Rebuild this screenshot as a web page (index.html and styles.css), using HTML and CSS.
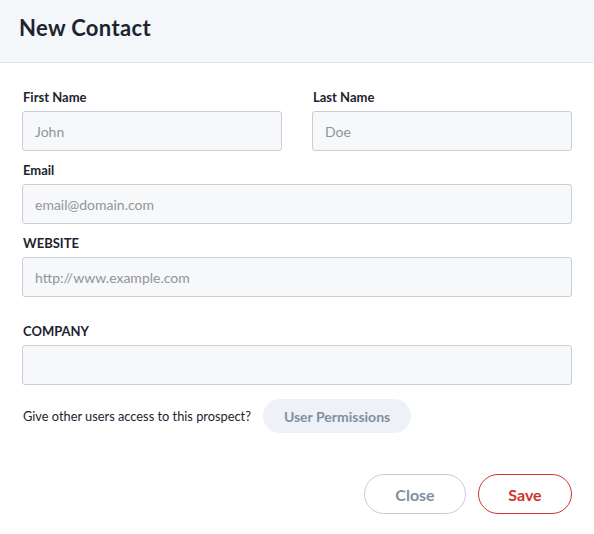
FILE: index.html
```html
<!DOCTYPE html>
<html>
<head>
<meta charset="utf-8">
<link rel="stylesheet" href="styles.css">
</head>
<body>
<div class="modal">
  <div class="header"><h1 class="title">New Contact</h1></div>
  <div class="body">
    <div class="row">
      <div class="field">
        <label class="label">First Name</label>
        <input class="input" placeholder="John">
      </div>
      <div class="field">
        <label class="label">Last Name</label>
        <input class="input" placeholder="Doe">
      </div>
    </div>
    <div class="field">
      <label class="label">Email</label>
      <input class="input" placeholder="email@domain.com">
    </div>
    <div class="field">
      <label class="label">WEBSITE</label>
      <input class="input" placeholder="http://www.example.com">
    </div>
    <div class="field company">
      <label class="label">COMPANY</label>
      <input class="input">
    </div>
    <div class="perm">
      <span class="perm-text">Give other users access to this prospect?</span>
      <button class="btn-perm">User Permissions</button>
    </div>
    <div class="footer">
      <button class="btn btn-close">Close</button>
      <button class="btn btn-save">Save</button>
    </div>
  </div>
</div>
</body>
</html>
```

FILE: styles.css
```css
* { box-sizing: border-box; }
html, body { margin: 0; padding: 0; background: #fff; }
body { font-family: Lato, "Open Sans", sans-serif; color: #1f2430; }
.header {
  height: 63px;
  background: #f4f7fa;
  border-bottom: 1px solid #e1e5ea;
  display: flex;
  align-items: center;
  padding-left: 19px;
}
.title {
  margin: 0;
  font-size: 22px;
  font-weight: 700;
  color: #1d2330;
  letter-spacing: 0.35px;
  position: relative;
  top: -4px;
}
.body { padding: 26px 22px 0 22px; }
.row { display: flex; gap: 30px; }
.row .field { flex: 1; }
.field { display: flex; flex-direction: column; margin-bottom: 11px; }
.label {
  font-size: 13px;
  font-weight: 700;
  color: #1d2330;
  line-height: 16px;
  margin-bottom: 6px;
  padding-left: 1px;
}
.input {
  height: 40px;
  border: 1px solid #c9ced6;
  border-radius: 3px;
  background: #f6f8fa;
  font-family: Lato, sans-serif;
  font-size: 14px;
  padding: 0 12px;
  color: #333;
}
.input::placeholder { color: #919599; }
.company { margin-top: 26px; margin-bottom: 14px; }
.perm { display: flex; align-items: center; gap: 12px; }
.perm-text { font-size: 12.8px; color: #1d2330; padding-left: 1px; }
.btn-perm {
  height: 34px;
  padding: 0 21px;
  border: none;
  border-radius: 17px;
  background: #eef1f5;
  color: #7f8fa6;
  font-family: Lato, sans-serif;
  font-weight: 700;
  font-size: 14px;
}
.footer { display: flex; justify-content: flex-end; gap: 12px; margin-top: 41px; }
.btn {
  height: 40px;
  border-radius: 20px;
  background: #fff;
  font-family: Lato, sans-serif;
  font-weight: 700;
  font-size: 16px;
}
.btn-close { width: 102px; border: 1px solid #c5ccd6; color: #7f8fa6; }
.btn-save { width: 94px; border: 1px solid #d0342c; color: #d0342c; }
```
